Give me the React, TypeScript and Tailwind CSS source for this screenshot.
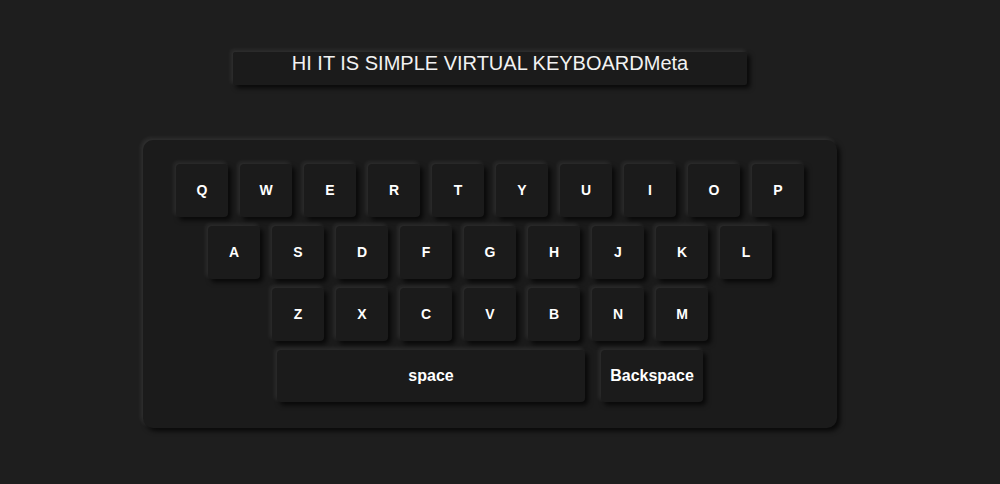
import React from "react";

const rows = [
  ["Q", "W", "E", "R", "T", "Y", "U", "I", "O", "P"],
  ["A", "S", "D", "F", "G", "H", "J", "K", "L"],
  ["Z", "X", "C", "V", "B", "N", "M"],
];

const raised =
  "bg-[#1b1b1b] shadow-[-2px_-2px_4px_rgba(255,255,255,0.09),3px_3px_5px_rgba(0,0,0,0.75)]";

function Key({ label }: { label: string }) {
  return (
    <button
      className={`w-[52px] h-[53px] rounded-[4px] ${raised} text-white text-[14px] font-bold flex items-center justify-center`}
    >
      {label}
    </button>
  );
}

export default function App() {
  return (
    <div
      className="min-h-screen h-[484px] bg-[#1e1e1e] flex flex-col items-center pr-[20px]"
      style={{ fontFamily: '"Liberation Sans", Arial, sans-serif' }}
    >
      <div
        className={`mt-[52px] w-[514px] h-[33px] rounded-[2px] ${raised} text-[#f2f2f2] text-[20px] leading-[22px] flex items-start justify-center`}
      >
        HI IT IS SIMPLE VIRTUAL KEYBOARDMeta
      </div>

      <div
        className={`mt-[55px] w-[694px] h-[288px] rounded-[10px] ${raised} flex flex-col items-center pt-[24px] gap-[9px]`}
      >
        {rows.map((row, i) => (
          <div key={i} className="flex gap-[12px]">
            {row.map((k) => (
              <Key key={k} label={k} />
            ))}
          </div>
        ))}
        <div className="flex gap-[16px]">
          <button
            className={`w-[308px] h-[52px] rounded-[4px] ${raised} text-white text-[16px] font-bold flex items-center justify-center`}
          >
            space
          </button>
          <button
            className={`w-[102px] h-[52px] rounded-[4px] ${raised} text-white text-[16px] font-bold flex items-center justify-center`}
          >
            Backspace
          </button>
        </div>
      </div>
    </div>
  );
}
